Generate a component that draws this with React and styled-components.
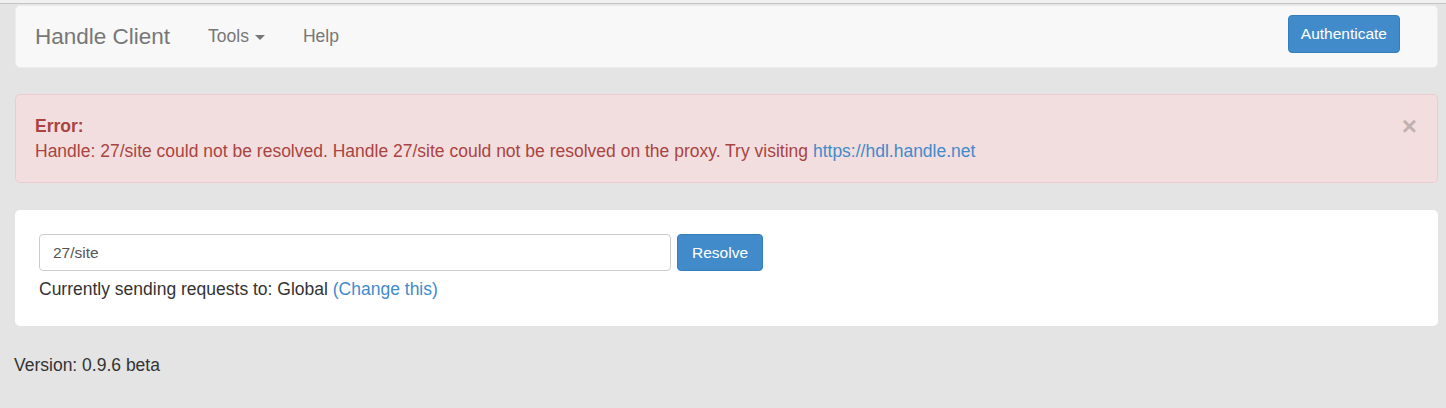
import React from "react";
import styled, { createGlobalStyle } from "styled-components";

const GlobalStyle = createGlobalStyle`
  html, body {
    margin: 0;
    padding: 0;
    background: #e4e4e4;
  }
  body {
    font-family: "Liberation Sans", Arial, sans-serif;
    font-size: 17.5px;
    line-height: 25px;
    color: #333;
  }
  * {
    box-sizing: border-box;
  }
`;

const TopEdge = styled.div`
  height: 4px;
  background: #f0f0f0;
  border-bottom: 1px solid #c4c4c4;
`;

const Page = styled.div`
  padding: 1px 8px 0 15px;
`;

const Navbar = styled.nav`
  display: flex;
  align-items: center;
  height: 63px;
  background: #f8f8f8;
  border: 1px solid #ececec;
  border-radius: 5px;
`;

const Brand = styled.a`
  padding: 0 19px;
  font-size: 22.5px;
  line-height: 30px;
  color: #777;
  text-decoration: none;
`;

const NavLink = styled.a`
  display: flex;
  align-items: center;
  gap: 6px;
  padding: 0 19px;
  color: #777;
  text-decoration: none;
`;

const Caret = styled.span`
  display: inline-block;
  width: 0;
  height: 0;
  margin-top: 2px;
  border-top: 5px solid #777;
  border-left: 5px solid transparent;
  border-right: 5px solid transparent;
`;

const Spacer = styled.div`
  flex: 1;
`;

const Button = styled.button`
  height: ${(p) => p.$h || 37}px;
  padding: 0 ${(p) => p.$px || 15}px;
  font-family: inherit;
  font-size: 15.5px;
  color: #fff;
  background: #428bca;
  border: 1px solid #357ebd;
  border-radius: 4px;
`;

const NavButton = styled(Button)`
  align-self: flex-start;
  margin: 9px 37px 0 0;
`;

const Alert = styled.div`
  display: flex;
  margin-top: 26px;
  padding: 19px 19px 18px;
  background: #f2dede;
  border: 1px solid #ebccd1;
  border-radius: 5px;
  color: #a94442;
`;

const AlertBody = styled.div`
  flex: 1;
`;

const Strong = styled.div`
  font-weight: bold;
`;

const Link = styled.a`
  color: #428bca;
  text-decoration: none;
`;

const Close = styled.span`
  margin-right: 1px;
  font-size: 26px;
  font-weight: bold;
  line-height: 25px;
  color: #000;
  opacity: 0.2;
`;

const Panel = styled.div`
  margin-top: 27px;
  padding: 24px;
  background: #fff;
  border-radius: 5px;
`;

const Row = styled.div`
  display: flex;
  gap: 6px;
`;

const Input = styled.input`
  width: 632px;
  height: 37px;
  padding: 0 13px;
  font-family: inherit;
  font-size: 15.5px;
  color: #555;
  border: 1px solid #ccc;
  border-radius: 4px;
  outline: none;
`;

const Helper = styled.div`
  margin-top: 6px;
`;

const Version = styled.div`
  margin-top: 27px;
  margin-left: -1px;
`;

export default function App() {
  return (
    <>
      <GlobalStyle />
      <TopEdge />
      <Page>
        <Navbar>
          <Brand>Handle Client</Brand>
          <NavLink>
            Tools <Caret />
          </NavLink>
          <NavLink>Help</NavLink>
          <Spacer />
          <NavButton $h={38} $px={12}>
            Authenticate
          </NavButton>
        </Navbar>
        <Alert>
          <AlertBody>
            <Strong>Error:</Strong>
            Handle: 27/site could not be resolved. Handle 27/site could not be
            resolved on the proxy. Try visiting{" "}
            <Link>https://hdl.handle.net</Link>
          </AlertBody>
          <Close>×</Close>
        </Alert>
        <Panel>
          <Row>
            <Input defaultValue="27/site" />
            <Button $px={14}>Resolve</Button>
          </Row>
          <Helper>
            Currently sending requests to: Global <Link>(Change this)</Link>
          </Helper>
        </Panel>
        <Version>Version: 0.9.6 beta</Version>
      </Page>
    </>
  );
}
